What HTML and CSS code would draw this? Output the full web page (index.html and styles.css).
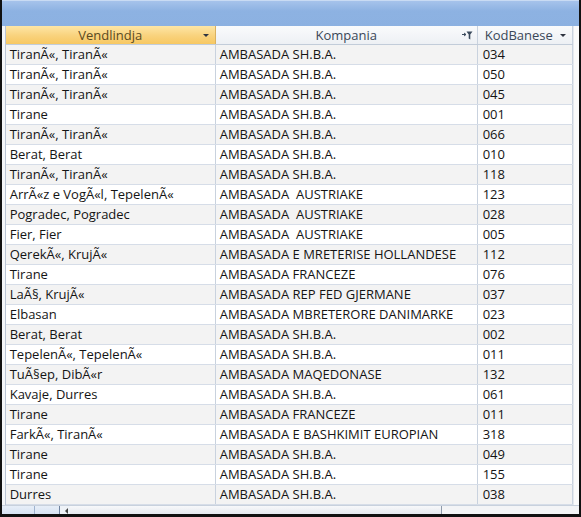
FILE: index.html
```html
<!DOCTYPE html>
<html>
<head>
<meta charset="utf-8">
<link rel="stylesheet" href="styles.css">
</head>
<body>
<div class="window">
  <div class="titlebar"></div>
  <div class="sheet">
    <div class="selector"></div>
    <div class="grid">
      <div class="row head">
        <div class="cell c1 hsel"><span class="htext">Vendlindja</span><span class="arrow"></span></div>
        <div class="cell c2"><span class="htext">Kompania</span>
          <svg class="filter" width="11" height="9" viewBox="0 0 11 9"><path d="M0 3.5 L4 3.5 M2 2 L4 3.5 L2 5" stroke="#3b4a5c" stroke-width="1" fill="none"/><path d="M4.5 0.5 H10.5 L8.3 3.5 V8.5 L6.7 7.5 V3.5 Z" fill="#3b4a5c"/></svg>
        </div>
        <div class="cell c3"><span class="htext">KodBanese</span><span class="arrow"></span></div>
      </div>
      <div class="row"><div class="cell c1">TiranÃ«, TiranÃ«</div><div class="cell c2">AMBASADA SH.B.A.</div><div class="cell c3">034</div></div>
      <div class="row"><div class="cell c1">TiranÃ«, TiranÃ«</div><div class="cell c2">AMBASADA SH.B.A.</div><div class="cell c3">050</div></div>
      <div class="row"><div class="cell c1">TiranÃ«, TiranÃ«</div><div class="cell c2">AMBASADA SH.B.A.</div><div class="cell c3">045</div></div>
      <div class="row"><div class="cell c1">Tirane</div><div class="cell c2">AMBASADA SH.B.A.</div><div class="cell c3">001</div></div>
      <div class="row"><div class="cell c1">TiranÃ«, TiranÃ«</div><div class="cell c2">AMBASADA SH.B.A.</div><div class="cell c3">066</div></div>
      <div class="row"><div class="cell c1">Berat, Berat</div><div class="cell c2">AMBASADA SH.B.A.</div><div class="cell c3">010</div></div>
      <div class="row"><div class="cell c1">TiranÃ«, TiranÃ«</div><div class="cell c2">AMBASADA SH.B.A.</div><div class="cell c3">118</div></div>
      <div class="row"><div class="cell c1">ArrÃ«z e VogÃ«l, TepelenÃ«</div><div class="cell c2">AMBASADA  AUSTRIAKE</div><div class="cell c3">123</div></div>
      <div class="row"><div class="cell c1">Pogradec, Pogradec</div><div class="cell c2">AMBASADA  AUSTRIAKE</div><div class="cell c3">028</div></div>
      <div class="row"><div class="cell c1">Fier, Fier</div><div class="cell c2">AMBASADA  AUSTRIAKE</div><div class="cell c3">005</div></div>
      <div class="row"><div class="cell c1">QerekÃ«, KrujÃ«</div><div class="cell c2">AMBASADA E MRETERISE HOLLANDESE</div><div class="cell c3">112</div></div>
      <div class="row"><div class="cell c1">Tirane</div><div class="cell c2">AMBASADA FRANCEZE</div><div class="cell c3">076</div></div>
      <div class="row"><div class="cell c1">LaÃ§, KrujÃ«</div><div class="cell c2">AMBASADA REP FED GJERMANE</div><div class="cell c3">037</div></div>
      <div class="row"><div class="cell c1">Elbasan</div><div class="cell c2">AMBASADA MBRETERORE DANIMARKE</div><div class="cell c3">023</div></div>
      <div class="row"><div class="cell c1">Berat, Berat</div><div class="cell c2">AMBASADA SH.B.A.</div><div class="cell c3">002</div></div>
      <div class="row"><div class="cell c1">TepelenÃ«, TepelenÃ«</div><div class="cell c2">AMBASADA SH.B.A.</div><div class="cell c3">011</div></div>
      <div class="row"><div class="cell c1">TuÃ§ep, DibÃ«r</div><div class="cell c2">AMBASADA MAQEDONASE</div><div class="cell c3">132</div></div>
      <div class="row"><div class="cell c1">Kavaje, Durres</div><div class="cell c2">AMBASADA SH.B.A.</div><div class="cell c3">061</div></div>
      <div class="row"><div class="cell c1">Tirane</div><div class="cell c2">AMBASADA FRANCEZE</div><div class="cell c3">011</div></div>
      <div class="row"><div class="cell c1">FarkÃ«, TiranÃ«</div><div class="cell c2">AMBASADA E BASHKIMIT EUROPIAN</div><div class="cell c3">318</div></div>
      <div class="row"><div class="cell c1">Tirane</div><div class="cell c2">AMBASADA SH.B.A.</div><div class="cell c3">049</div></div>
      <div class="row"><div class="cell c1">Tirane</div><div class="cell c2">AMBASADA SH.B.A.</div><div class="cell c3">155</div></div>
      <div class="row"><div class="cell c1">Durres</div><div class="cell c2">AMBASADA SH.B.A.</div><div class="cell c3">038</div></div>
    </div>
    <div class="vstrip"></div>
  </div>
  <div class="bottombar">
    <div class="nav"><div class="navbox"></div><div class="navbox small"></div></div>
    <div class="tri"></div>
    <div class="hscroll"><div class="thumb"></div></div>
  </div>
</div>
</body>
</html>
```
FILE: styles.css
```css
html, body {
  margin: 0;
  padding: 0;
  width: 581px;
  height: 517px;
  overflow: hidden;
  background: #ffffff;
}
.window {
  width: 581px;
  height: 517px;
  box-sizing: border-box;
  border-left: 2px solid #111;
  border-right: 2px solid #111;
  border-bottom: 3px solid #111;
  display: flex;
  flex-direction: column;
  font-family: "Open Sans", "Noto Sans", sans-serif;
  font-size: 13px;
  color: #141414;
}
.titlebar {
  height: 26px;
  flex: none;
  background: linear-gradient(#a6c3eb, #8db2e2 40%, #8cb1e1);
  border-top: 1px solid #c9dbf3;
  box-sizing: border-box;
}
.sheet {
  display: flex;
  flex: none;
  height: 479px;
}
.selector {
  width: 3px;
  background: #f4f6f9;
  border-right: 1px solid #b9c4d4;
}
.grid {
  display: flex;
  flex-direction: column;
  width: 567px;
}
.row {
  display: flex;
  height: 20px;
  box-sizing: border-box;
  border-bottom: 1px solid #d6dde8;
}
.row:nth-child(even) {
  background: #f3f3f3;
}
.cell {
  box-sizing: border-box;
  padding-left: 4px;
  line-height: 19px;
  white-space: pre;
  overflow: hidden;
  border-right: 1px solid #c9d2de;
}
.c1 { width: 210px; }
.c2 { width: 262px; }
.c3 { width: 95px; padding-left: 5px; }
.row.head {
  height: 19px;
  background: linear-gradient(#fafbfc, #edf0f4);
  border-bottom: 1px solid #c2ccd9;
  color: #3a4758;
  font-size: 13px;
}
.head .cell {
  display: flex;
  align-items: center;
  justify-content: center;
  line-height: 18px;
  position: relative;
  padding-left: 0;
}
.head .c3 { justify-content: flex-start; padding-left: 7px; }
.head .hsel {
  background: linear-gradient(#fde6a6, #f9d27c 55%, #f7c862);
  color: #5a4a22;
  border-right: 1px solid #d9b160;
}
.arrow {
  position: absolute;
  right: 6px;
  top: 8px;
  width: 0;
  height: 0;
  border-left: 3px solid transparent;
  border-right: 3px solid transparent;
  border-top: 3px solid #2e3440;
}
.filter {
  position: absolute;
  right: 4px;
  top: 5px;
}
.vstrip {
  width: 7px;
  background: #fbfbfb;
  border-left: 1px solid #e6e9ee;
  box-sizing: border-box;
}
.bottombar {
  flex: 1;
  display: flex;
  align-items: stretch;
  background: #eef2f7;
  border-top: 1px solid #c8d1dd;
}
.nav {
  display: flex;
  width: 58px;
}
.navbox {
  width: 33px;
  background: linear-gradient(#e7eef8, #d6e2f2);
  border-right: 1px solid #9fb3cf;
}
.navbox.small { width: 25px; border-right: 1px solid #6f83a0; }
.tri {
  width: 10px;
  position: relative;
}
.tri::after {
  content: "";
  position: absolute;
  left: 5px;
  top: 2px;
  border-top: 3px solid transparent;
  border-bottom: 3px solid transparent;
  border-right: 3px solid #444;
}
.hscroll {
  flex: 1;
  display: flex;
  background: #f3f4f6;
}
.thumb {
  width: 371px;
  background: linear-gradient(#f7f8fa, #e5e9ef);
  border-right: 1px solid #8e9aaa;
}
```
